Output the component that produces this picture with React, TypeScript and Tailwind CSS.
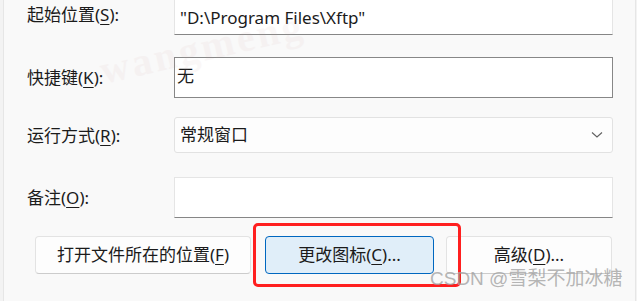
import React from "react";

const font = { fontFamily: '"Noto Sans", "Noto Sans CJK SC", sans-serif' };

function Label({ text, k }: { text: string; k: string }) {
  return (
    <div className="w-[147px] shrink-0 text-[17px] text-[#1b1b1b] leading-none">
      {text}(<u className="underline-offset-[3px]">{k}</u>):
    </div>
  );
}

export default function App() {
  return (
    <div
      className="relative w-[637px] h-[301px] overflow-hidden bg-[#f3f3f3] flex text-[#1b1b1b]"
      style={font}
    >
      <div className="w-[3px] shrink-0" />
      <div className="relative flex-1 bg-[#f9f9f9] border-l border-r border-[#e6e6e6] pl-[23px] pr-[22px]">
        {/* faint watermark */}
        <div className="pointer-events-none absolute left-[94px] top-[18px] -rotate-[13deg] font-['Liberation_Serif',serif] font-bold text-[40px] tracking-[3px] text-[#c89a9a] opacity-[0.07] whitespace-nowrap">
          wangmeng
        </div>

        <div className="flex flex-col -mt-[6px]">
          {/* row 1 */}
          <div className="flex items-center h-[41px]">
            <Label text="起始位置" k="S" />
            <div className="flex-1 h-full bg-white border border-[#e5e5e5] border-b-[#868686] flex items-center pl-[5px] text-[17px] pt-[6px]">
              "D:\Program Files\Xftp"
            </div>
          </div>
          {/* row 2 */}
          <div className="flex items-center h-[41px] mt-[22px]">
            <Label text="快捷键" k="K" />
            <div className="flex-1 h-full bg-white border border-[#878787] flex items-start pl-[2px] pt-[5px] text-[17px]">
              无
            </div>
          </div>
          {/* row 3 */}
          <div className="flex items-center h-[36px] mt-[19px]">
            <Label text="运行方式" k="R" />
            <div className="flex-1 h-full bg-[#fdfdfd] border border-[#e2e2e2] rounded-[3px] flex items-center pl-[5px] pr-[8px] text-[17px]">
              <span className="flex-1">常规窗口</span>
              <svg width="12" height="8" viewBox="0 0 12 8" className="mr-[1px]">
                <path d="M1 1.5 L6 6 L11 1.5" fill="none" stroke="#606060" strokeWidth="1.1" />
              </svg>
            </div>
          </div>
          {/* row 4 */}
          <div className="flex items-center h-[41px] mt-[24px]">
            <Label text="备注" k="O" />
            <div className="flex-1 h-full bg-white border border-[#e5e5e5] border-b-[#868686]" />
          </div>
          {/* buttons */}
          <div className="flex items-center h-[38px] mt-[18px] text-[17px]">
            <div className="ml-[8px] w-[216px] h-full shrink-0 bg-[#fdfdfd] border border-[#e3e3e3] border-b-[#cccccc] rounded-[4px] flex items-center justify-center">
              打开文件所在的位置(<u className="underline-offset-[3px]">F</u>)
            </div>
            <div className="ml-[14px] w-[169px] h-full shrink-0 bg-[#e0eef9] border border-[#0067c0] rounded-[4px] flex items-center justify-center">
              更改图标(<u className="underline-offset-[3px]">C</u>)...
            </div>
            <div className="ml-[12px] w-[166px] h-full shrink-0 bg-[#fdfdfd] border border-[#e3e3e3] border-b-[#cccccc] rounded-[4px] flex items-center justify-center">
              高级(<u className="underline-offset-[3px]">D</u>)...
            </div>
          </div>
        </div>
      </div>
      <div className="w-[1px] shrink-0" />

      {/* red highlight */}
      <div className="absolute left-[253px] top-[223px] w-[208px] h-[64px] border-[3px] border-[#ff1f1f] rounded-[5px] pointer-events-none" />

      {/* CSDN watermark */}
      <div
        className="absolute left-[430px] top-[269px] text-[19px] leading-none text-[#a3a3a3]/80 whitespace-nowrap pointer-events-none"
        style={{ fontFamily: '"Liberation Sans", "Noto Sans CJK SC", sans-serif' }}
      >
        CSDN @雪梨不加冰糖
      </div>
    </div>
  );
}
